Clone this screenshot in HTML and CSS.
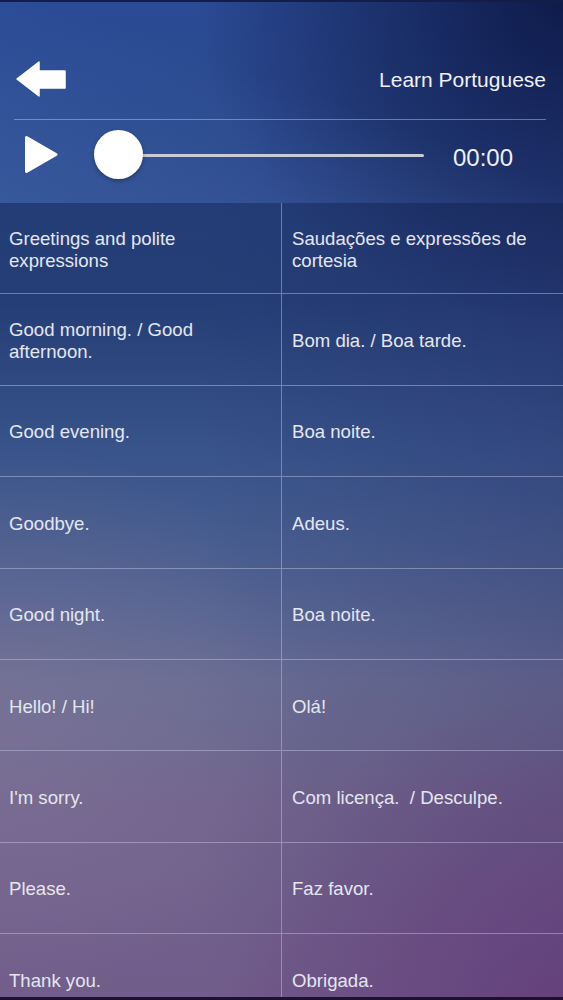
FILE: index.html
```html
<!DOCTYPE html>
<html>
<head>
<meta charset="utf-8">
<link rel="stylesheet" href="styles.css">
</head>
<body>
<div class="screen">
  <header class="top">
    <div class="titlebar">
      <svg class="back" width="50" height="36" viewBox="-1 -1 50 36">
        <path d="M0 17 L22 0 L22 9 L48 9 L48 26 L22 26 L22 34 Z" fill="#fff" stroke="#fff" stroke-width="1.5" stroke-linejoin="round"/>
      </svg>
      <div class="title">Learn Portuguese</div>
    </div>
    <div class="divider"></div>
    <div class="player">
      <svg class="play" width="34" height="39" viewBox="-1 -1 34 39">
        <path d="M1.5 1.5 L31 18.5 L1.5 35.5 Z" fill="#fff" stroke="#fff" stroke-width="3" stroke-linejoin="round"/>
      </svg>
      <div class="slider">
        <div class="track"></div>
        <div class="thumb"></div>
      </div>
      <div class="time">00:00</div>
    </div>
  </header>
  <div class="table">
    <div class="row"><div class="cell en">Greetings and polite expressions</div><div class="cell pt">Saudações e expressões de cortesia</div></div>
    <div class="row"><div class="cell en">Good morning. / Good afternoon.</div><div class="cell pt">Bom dia. / Boa tarde.</div></div>
    <div class="row"><div class="cell en">Good evening.</div><div class="cell pt">Boa noite.</div></div>
    <div class="row"><div class="cell en">Goodbye.</div><div class="cell pt">Adeus.</div></div>
    <div class="row"><div class="cell en">Good night.</div><div class="cell pt">Boa noite.</div></div>
    <div class="row"><div class="cell en">Hello! / Hi!</div><div class="cell pt">Olá!</div></div>
    <div class="row"><div class="cell en">I'm sorry.</div><div class="cell pt">Com licença.&nbsp; / Desculpe.</div></div>
    <div class="row"><div class="cell en">Please.</div><div class="cell pt">Faz favor.</div></div>
    <div class="row"><div class="cell en">Thank you.</div><div class="cell pt">Obrigada.</div></div>
  </div>
  <div class="bottom-edge"></div>
</div>
</body>
</html>
```
FILE: styles.css
```css
* { box-sizing: border-box; }
html, body { margin: 0; padding: 0; }
body {
  width: 563px;
  height: 1000px;
  overflow: hidden;
  font-family: "Liberation Sans", Arial, sans-serif;
  color: #fff;
}
.screen {
  position: relative;
  width: 563px;
  height: 1000px;
  overflow: hidden;
  border-top: 2px solid #131d47;
  background:
    radial-gradient(ellipse 65% 32% at 100% 0%, rgba(8,18,60,0.8), rgba(8,18,60,0) 100%),
    radial-gradient(ellipse 55% 28% at 0% 72%, rgba(150,135,165,0.4), rgba(150,135,165,0) 100%),
    radial-gradient(ellipse 60% 30% at 100% 100%, rgba(110,55,125,0.55), rgba(110,55,125,0) 100%),
    linear-gradient(to right, rgba(0,0,0,0) 35%, rgba(30,20,80,0.18) 100%),
    linear-gradient(to bottom, #2a4b95 0%, #2b4888 20%, #2d4886 30%, #41609a 45%, #576c9f 57%, #74789f 68%, #7b6c96 80%, #77608f 100%);
  display: flex;
  flex-direction: column;
}
.top {
  flex-shrink: 0;
  height: 201px;
  background: linear-gradient(to top right, rgba(90,130,210,0.28) 0%, rgba(90,130,210,0) 55%);
}
.titlebar {
  display: flex;
  align-items: center;
  justify-content: space-between;
  height: 36px;
  margin: 59px 17px 0 16px;
}
.back { display: block; }
.title {
  font-size: 21px;
  line-height: 24px;
  padding-top: 2px;
  color: #eef0f8;
}
.divider {
  height: 1px;
  margin: 22px 17px 0 14px;
  background: rgba(200,210,240,0.45);
}
.player {
  display: flex;
  align-items: center;
  height: 49px;
  margin-top: 10px;
  padding-left: 24px;
}
.play { display: block; }
.slider {
  position: relative;
  width: 330px;
  height: 49px;
  margin-left: 36px;
}
.track {
  position: absolute;
  left: 24px;
  right: 0;
  top: 24px;
  height: 3px;
  border-radius: 2px;
  background: #c9cbd6;
}
.thumb {
  position: absolute;
  left: 0;
  top: 0;
  width: 49px;
  height: 49px;
  border-radius: 50%;
  background: #fff;
  box-shadow: 0 2px 4px rgba(0,0,0,0.3);
}
.time {
  font-size: 24px;
  line-height: 28px;
  margin-left: 29px;
  margin-top: 6px;
  color: #eef0f8;
}
.table {
  flex: 1;
  background: linear-gradient(to bottom, rgba(5,15,50,0.2), rgba(5,15,50,0.04));
}
.row {
  display: grid;
  grid-template-columns: 282px 1fr;
  height: 91.4px;
  border-bottom: 1.5px solid rgba(200,205,235,0.45);
}
.cell {
  display: flex;
  align-items: center;
  font-size: 18.6px;
  line-height: 22px;
  padding-top: 3px;
  color: #e4e6f0;
}
.en {
  padding-left: 9px;
  padding-right: 8px;
  border-right: 1.5px solid rgba(200,205,235,0.45);
}
.pt {
  padding-left: 10px;
  padding-right: 8px;
}
.bottom-edge {
  position: absolute;
  left: 0;
  right: 0;
  bottom: 0;
  height: 3px;
  background: #1c1230;
}
```
